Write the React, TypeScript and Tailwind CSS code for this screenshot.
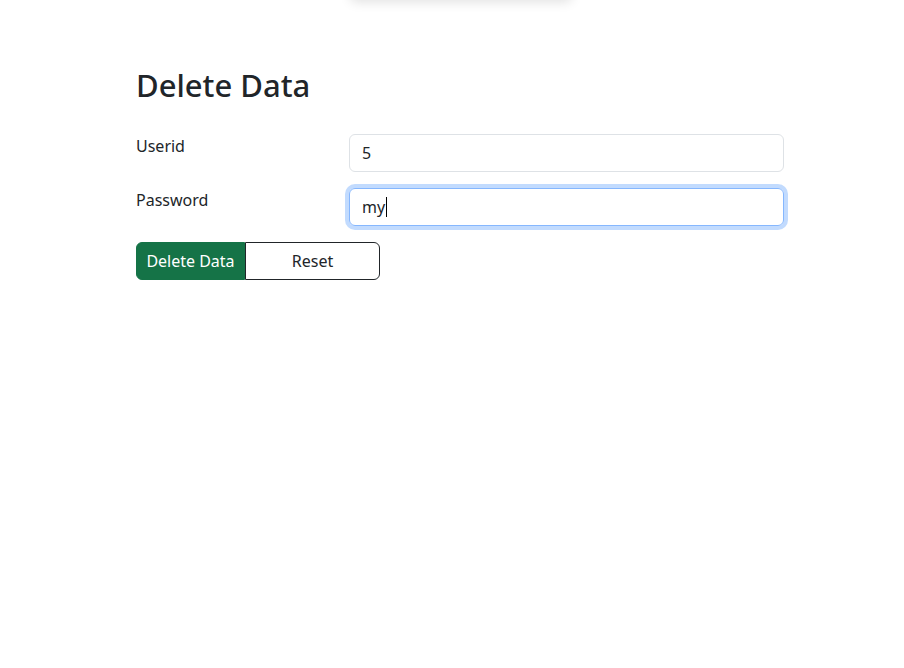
import React from "react";

export default function App() {
  return (
    <div
      className="relative min-h-[668px] w-full bg-white text-[#212529]"
      style={{ fontFamily: '"Noto Sans", "Liberation Sans", sans-serif' }}
    >
      <div className="absolute left-[350px] top-[-40px] h-[40px] w-[222px] rounded-md bg-white shadow-[0_2px_12px_rgba(0,0,0,0.12)]" />
      <div className="ml-[136px] w-[648px] pt-[66px]">
        <h2 className="mb-[30px] text-[31px] font-medium leading-[38px]">Delete Data</h2>
        <div className="mb-4 flex">
          <label className="w-[213px] text-base leading-6">Userid</label>
          <input
            className="h-[38px] flex-1 rounded-md border border-[#dee2e6] px-3 text-base text-[#212529] outline-none"
            defaultValue="5"
          />
        </div>
        <div className="mb-4 flex">
          <label className="w-[213px] text-base leading-6">Password</label>
          <div className="flex h-[38px] flex-1 items-center rounded-md border border-[#86b7fe] px-3 text-base shadow-[0_0_0_4px_rgba(13,110,253,0.25)]">
            <span>my</span>
            <span className="ml-px inline-block h-[20px] w-px bg-black" />
          </div>
        </div>
        <div className="flex">
          <button className="h-[38px] w-[109px] rounded-l-md border border-[#157347] bg-[#157347] text-base text-white">
            Delete Data
          </button>
          <button className="h-[38px] w-[135px] rounded-r-md border border-[#212529] bg-white text-base text-[#212529]">
            Reset
          </button>
        </div>
      </div>
    </div>
  );
}
